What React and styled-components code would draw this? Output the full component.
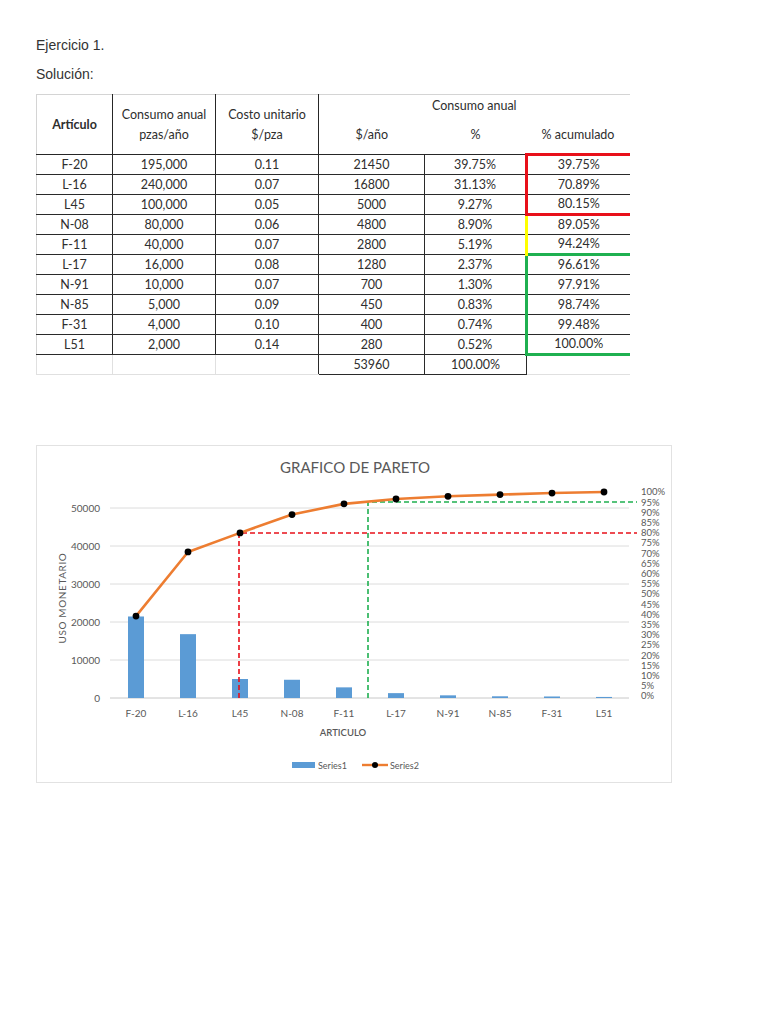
import React from "react";
import styled, { createGlobalStyle } from "styled-components";

const Global = createGlobalStyle`
  html, body { margin: 0; padding: 0; background: #fff; }
  body { font-family: "Liberation Sans", Arial, sans-serif; }
`;

const Page = styled.main`
  width: 768px;
  min-height: 1024px;
  box-sizing: border-box;
  padding: 35px 0 0 36px;
`;

const Line = styled.p`
  margin: 0 0 ${(p) => p.$gap || 0}px;
  font-size: 14px;
  line-height: 20px;
  color: #333;
`;

const Table = styled.table`
  margin-top: 10px;
  border-collapse: collapse;
  table-layout: fixed;
  width: 593px;
  font-family: Lato, "Open Sans", sans-serif;
  font-size: 12.5px;
  color: #2e2e2e;
`;

const Tr = styled.tr`
  height: ${(p) => p.$h}px;
`;

const Th = styled.th`
  padding: 0;
  font-weight: ${(p) => (p.$bold ? 700 : 400)};
  text-align: center;
  vertical-align: middle;
  line-height: 20px;
  border-top: ${(p) => (p.$top ? "1px solid #d4d4d4" : "none")};
  border-left: ${(p) => (p.$first ? "1px solid #d4d4d4" : "none")};
  border-right: ${(p) => (p.$divider ? "1px solid #262626" : "none")};
  border-bottom: 1px solid #262626;
`;

const Td = styled.td`
  padding: 0;
  line-height: 16px;
  text-align: center;
  border: 1px solid #2a2a2a;
  &:first-child { border-left-color: #d4d4d4; }
  &:last-child { border-right: none; }
`;

const AccTd = styled(Td)`
  border-left: 3px solid ${(p) => p.$color};
  border-top: ${(p) => (p.$top ? `3px solid ${p.$color}` : "1px solid #2a2a2a")};
  border-bottom: ${(p) => (p.$bottom ? `3px solid ${p.$color}` : "1px solid #2a2a2a")};
`;

const FootTd = styled.td`
  padding: 0;
  line-height: 16px;
  text-align: center;
  border-top: 1px solid #2a2a2a;
  border-bottom: 1px solid ${(p) => (p.$dark ? "#2a2a2a" : "#e0e0e0")};
  border-left: 1px solid ${(p) => (p.$dark ? "#2a2a2a" : "#e0e0e0")};
  border-right: ${(p) => (p.$last ? "none" : `1px solid ${p.$dark || p.$rightDark ? "#2a2a2a" : "#e0e0e0"}`)};
`;

const ChartCard = styled.section`
  margin-top: 70px;
  width: 636px;
  height: 338px;
  box-sizing: border-box;
  border: 1px solid #e2e2e2;
  background: #fff;
`;

const ChartSvg = styled.svg`
  display: block;
  font-family: Lato, "Open Sans", sans-serif;
`;

const RED = "#e8101a";
const YELLOW = "#ffff00";
const GREEN = "#1fb050";

const rows = [
  ["F-20", "195,000", "0.11", "21450", "39.75%", "39.75%"],
  ["L-16", "240,000", "0.07", "16800", "31.13%", "70.89%"],
  ["L45", "100,000", "0.05", "5000", "9.27%", "80.15%"],
  ["N-08", "80,000", "0.06", "4800", "8.90%", "89.05%"],
  ["F-11", "40,000", "0.07", "2800", "5.19%", "94.24%"],
  ["L-17", "16,000", "0.08", "1280", "2.37%", "96.61%"],
  ["N-91", "10,000", "0.07", "700", "1.30%", "97.91%"],
  ["N-85", "5,000", "0.09", "450", "0.83%", "98.74%"],
  ["F-31", "4,000", "0.10", "400", "0.74%", "99.48%"],
  ["L51", "2,000", "0.14", "280", "0.52%", "100.00%"],
];

const accent = (i) => {
  if (i <= 2) return { color: RED, top: i === 0, bottom: i === 2 };
  if (i <= 4) return { color: YELLOW, top: false, bottom: false };
  return { color: GREEN, top: i === 5, bottom: i === 9 };
};

const cats = ["F-20", "L-16", "L45", "N-08", "F-11", "L-17", "N-91", "N-85", "F-31", "L51"];
const vals = [21450, 16800, 5000, 4800, 2800, 1280, 700, 450, 400, 280];
const cum = [39.75, 70.89, 80.15, 89.05, 94.24, 96.61, 97.91, 98.74, 99.48, 100];
const BASE = 697;
const cx = (i) => 136 + 52 * i;
const vy = (v) => BASE - (v / 10000) * 38;
const py = (p) => BASE - p * 2.06;
const GREY = "#595959";

function Pareto() {
  const pts = cum.map((p, i) => `${cx(i)},${py(p)}`).join(" ");
  return (
    <ChartSvg width="634" height="336" viewBox="37 445 634 336">
      <text x="355" y="472" textAnchor="middle" fontSize="15" fill={GREY} textLength="150" lengthAdjust="spacingAndGlyphs">
        GRAFICO DE PARETO
      </text>
      {[10000, 20000, 30000, 40000, 50000].map((v) => (
        <line key={v} x1="110" x2="629" y1={vy(v)} y2={vy(v)} stroke="#dcdcdc" strokeWidth="1" />
      ))}
      <line x1="110" x2="629" y1={BASE} y2={BASE} stroke="#c8c8c8" strokeWidth="1" />
      {[0, 10000, 20000, 30000, 40000, 50000].map((v) => (
        <text key={v} x="100" y={vy(v) + 3.5} textAnchor="end" fontSize="10" fill={GREY}>
          {v}
        </text>
      ))}
      <text x="0" y="0" transform="translate(66 597) rotate(-90)" textAnchor="middle" fontSize="10" fill={GREY} letterSpacing="0.6">
        USO MONETARIO
      </text>
      {vals.map((v, i) => (
        <rect key={i} x={cx(i) - 8} y={vy(v)} width="16" height={BASE - vy(v)} fill="#5b9bd5" />
      ))}
      {cats.map((c, i) => (
        <text key={c} x={cx(i)} y="716" textAnchor="middle" fontSize="10" fill={GREY}>
          {c}
        </text>
      ))}
      <text x="343" y="735" textAnchor="middle" fontSize="9.5" fill={GREY} fontWeight="600">
        ARTICULO
      </text>
      {Array.from({ length: 21 }, (_, k) => (
        <text key={k} x="641" y={695 - k * 10.2 + 3.3} fontSize="9.5" fill={GREY}>
          {k * 5}%
        </text>
      ))}
      <g fill="none" strokeWidth="1.6" strokeDasharray="5 3">
        <path d="M239 697 V532 H637" stroke={RED} />
        <path d="M368 697 V501 H637" stroke={GREEN} />
      </g>
      <polyline points={pts} fill="none" stroke="#ed7d31" strokeWidth="2.6" strokeLinejoin="round" />
      {cum.map((p, i) => (
        <circle key={i} cx={cx(i)} cy={py(p)} r="3.4" fill="#000" />
      ))}
      <rect x="292" y="761" width="23" height="6" fill="#5b9bd5" />
      <text x="318" y="767.5" fontSize="9" fill={GREY}>Series1</text>
      <line x1="362" x2="388" y1="764" y2="764" stroke="#ed7d31" strokeWidth="2.4" />
      <circle cx="375" cy="764" r="3" fill="#000" />
      <text x="390" y="767.5" fontSize="9" fill={GREY}>Series2</text>
    </ChartSvg>
  );
}

export default function App() {
  return (
    <>
      <Global />
      <Page>
        <Line $gap={9}>Ejercicio 1.</Line>
        <Line>Solución:</Line>
        <Table>
          <colgroup>
            <col style={{ width: 76 }} />
            <col style={{ width: 103 }} />
            <col style={{ width: 103 }} />
            <col style={{ width: 106 }} />
            <col style={{ width: 102 }} />
            <col style={{ width: 103 }} />
          </colgroup>
          <thead>
            <Tr $h={22}>
              <Th rowSpan={2} $bold $top $first $divider>Artículo</Th>
              <Th rowSpan={2} $top $divider>Consumo anual<br />pzas/año</Th>
              <Th rowSpan={2} $top $divider>Costo unitario<br />$/pza</Th>
              <Th colSpan={3} $top style={{ borderBottom: "none" }}>Consumo anual</Th>
            </Tr>
            <Tr $h={38}>
              <Th>$/año</Th>
              <Th>%</Th>
              <Th>% acumulado</Th>
            </Tr>
          </thead>
          <tbody>
            {rows.map((r, i) => {
              const a = accent(i);
              return (
                <Tr $h={20} key={r[0]}>
                  {r.slice(0, 5).map((c, j) => (
                    <Td key={j}>{c}</Td>
                  ))}
                  <AccTd $color={a.color} $top={a.top} $bottom={a.bottom}>{r[5]}</AccTd>
                </Tr>
              );
            })}
            <Tr $h={20}>
              <FootTd />
              <FootTd />
              <FootTd $rightDark />
              <FootTd $dark>53960</FootTd>
              <FootTd $dark>100.00%</FootTd>
              <FootTd $last />
            </Tr>
          </tbody>
        </Table>
        <ChartCard>
          <Pareto />
        </ChartCard>
      </Page>
    </>
  );
}
